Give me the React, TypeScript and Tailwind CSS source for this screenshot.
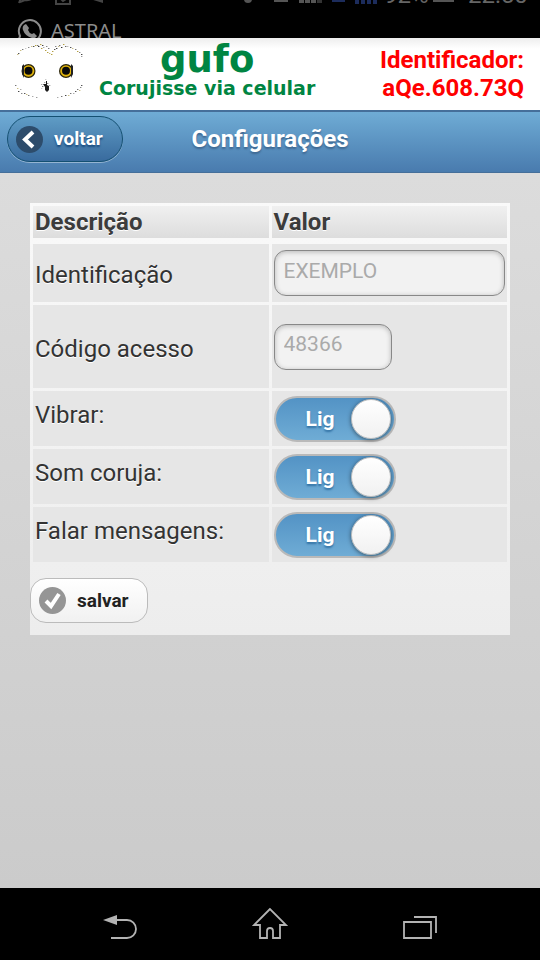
import { useState } from 'react';

const speckles: [number, number, string][] = [
  [18, 15, '#555'], [20, 12, '#c9bd84'], [22, 11, '#777'], [25, 10, '#ccc'], [28, 9, '#888'], [31, 8, '#c9bd84'],
  [33, 8, '#555'], [35, 7, '#b5a040'], [37, 7, '#777'], [38, 8, '#333'], [40, 6, '#b5a040'], [42, 7, '#444'],
  [41, 10, '#b5a040'], [43, 9, '#aaa'], [45, 12, '#b5a040'], [46, 8, '#888'], [47, 14, '#b5a040'], [48, 10, '#777'],
  [49, 15, '#c9bd84'], [51, 16, '#b5a040'], [52, 13, '#b5a040'], [54, 11, '#555'], [55, 8, '#888'], [56, 10, '#444'],
  [58, 8, '#c9bd84'], [59, 7, '#777'], [61, 9, '#333'], [63, 6, '#b5a040'], [65, 8, '#666'], [67, 8, '#bbb'],
  [70, 9, '#555'], [72, 10, '#c9bd84'], [75, 11, '#777'], [77, 13, '#b5a040'], [79, 14, '#888'], [81, 16, '#444'],
  [81, 18, '#999'], [17, 16, '#c9bd84'], [15, 47, '#777'], [17, 50, '#c9bd84'], [18, 53, '#444'], [20, 51, '#aaa'],
  [21, 55, '#888'], [24, 55, '#555'], [26, 56, '#c9bd84'], [28, 57, '#777'], [32, 58, '#aaa'], [36, 59, '#999'],
  [57, 59, '#aaa'], [61, 58, '#777'], [65, 57, '#444'], [68, 57, '#c9bd84'], [70, 55, '#777'], [73, 55, '#aaa'],
  [75, 53, '#555'], [77, 51, '#777'], [79, 52, '#c9bd84'], [80, 49, '#888'], [81, 47, '#555'], [41, 46, '#aaa'],
  [42, 48, '#777'], [44, 44, '#aaa'], [47, 45, '#888'], [49, 47, '#aaa'], [41, 50, '#ccc'], [45, 41, '#ccc'],
];

function Eye({ cx }: { cx: number }) {
  return (
    <g>
      <circle cx={cx} cy="33" r="7" fill="#2a2408" />
      <circle cx={cx} cy="33" r="5.8" fill="#e0b30c" />
      <circle cx={cx} cy="32.800" r="4" fill="#080808" />
    </g>
  );
}

function Owl() {
  return (
    <svg viewBox="0 0 99 72" className="h-[72px] w-[99px] shrink-0" role="img" aria-label="Coruja">
      {speckles.map(([x, y, fill]) => (
        <rect key={`${x}-${y}`} x={x} y={y} width="1.4" height="1" fill={fill} />
      ))}
      <Eye cx={28.5} />
      <Eye cx={66} />
      <path d="M22 28l2-2v14l-2-4zM73 28l-2-2v14l2-4z" fill="#222" />
      <path d="M43 46h3v-3h1v4l2 1v4l-2 2-2-2v-3z" fill="#1c1c1c" />
    </svg>
  );
}

function StatusBar() {
  return (
    <div className="flex h-[38px] flex-col overflow-hidden bg-black text-[#8c8c8c]">
      <div className="flex h-1 w-full shrink-0 items-end px-[17px]">
        <svg viewBox="0 0 506 6" className="h-[6px] w-full overflow-visible" aria-hidden="true">
          <g fill="none" stroke="#444" strokeWidth="2">
            <path d="M2 5l2-5M3 4l5-2q7 1 9-5M39 0v6h14v-6M44 1l2 2 3-2" />
          </g>
          <path d="M73 1h13v4z" fill="#444" />
          <circle cx="231" cy="1" r="4" fill="#555" />
          <path d="M257 1h14v3h-14zM282 0h5v5h-5zM288 0h5v5h-5zM294 0h5v5h-5zM416 0h21v4h-21z" fill="#555" />
          <path d="M300 0h5v5h-5z" fill="#333" />
          <path d="M315 0h13v4h-13zM338 0h4v6h-4zM344 0h4v6h-4zM350 0h4v6h-4zM356 0h4v6h-4z" fill="#1c2c5c" />
          <g fontFamily="Roboto, sans-serif" fontSize="24" fill="#666">
            <text x="367" y="5">92%</text>
            <text x="451" y="5">22:50</text>
          </g>
        </svg>
      </div>
      <div className="flex shrink-0 gap-2 px-[15px] pt-[13px] font-['Noto_Sans',sans-serif] text-[20px] leading-7">
        <svg viewBox="0 0 28 28" className="size-7" fill="none" stroke="currentColor" aria-hidden="true">
          <path d="M3 25l2-6a11 11 0 1 1 5 5z" strokeWidth="2" />
          <path d="M9 8l2-1 3 4-1 2q1 3 4 4l2-1 3 3q-2 3-5 2-7-2-9-8-1-3 1-5z" fill="currentColor" stroke="none" />
        </svg>
        <span>ASTRAL</span>
      </div>
    </div>
  );
}

function Toggle({ id }: { id: string }) {
  const [on, setOn] = useState(true);
  return (
    <label
      htmlFor={id}
      className={`relative flex h-[46px] w-[122px] cursor-pointer items-center rounded-full border-2 border-[#b9b9b9] px-[3px] text-[21px] font-bold ${
        on ? 'justify-end bg-linear-to-b from-[#5393c5] to-[#6facd5] text-white' : 'flex-row-reverse justify-end bg-[#eee] text-[#333]'
      }`}
    >
      <input id={id} type="checkbox" role="switch" checked={on} onChange={() => setOn(!on)} className="sr-only" />
      <span className={on ? 'mr-4 [text-shadow:0_2px_2px_#3373a5]' : 'ml-3'}>{on ? 'Lig' : 'Desl'}</span>
      <span className="size-10 rounded-full border border-[#bbb] bg-linear-to-b from-white to-[#f1f1f1] shadow-[0_1px_4px_rgba(0,0,0,0.5)]" />
    </label>
  );
}

const cell = 'bg-[#e6e6e6] px-[2px] py-0';
const headCell =
  'border-b-3 border-transparent bg-linear-to-b from-[#f0f0f0] to-[#ddd] bg-clip-padding px-[2px] py-0 leading-8 text-[#3c3c3c]';
const field =
  'block h-[46px] rounded-xl border border-[#888] bg-[#f2f2f2] px-[9px] pb-[5px] text-[21px] text-[#aaa] shadow-[inset_0_1px_5px_rgba(0,0,0,0.25)] outline-none';

const switches = [
  { id: 'vibrar', label: 'Vibrar:' },
  { id: 'som', label: 'Som coruja:' },
  { id: 'falar', label: 'Falar mensagens:' },
];

export default function App() {
  return (
    <div className="flex min-h-screen flex-col bg-black font-[Roboto,sans-serif] text-[#333]">
      <StatusBar />
      <header className="flex h-[72px] bg-linear-to-b from-[#eee] to-white to-15%">
        <Owl />
        <div className="flex flex-col items-center pt-[2px] font-['DejaVu_Sans',sans-serif] font-bold text-[#008542]">
          <span className="text-[37px] leading-[40px]">gufo</span>
          <span className="text-[19px] leading-4 whitespace-nowrap">Corujisse via celular</span>
        </div>
        <div className="ml-auto pt-2 pr-4 text-right text-2xl leading-7 font-bold text-[#f00]">
          <div>Identificador:</div>
          <div>aQe.608.73Q</div>
        </div>
      </header>
      <div className="grid h-[63px] grid-cols-[1fr_auto_1fr] items-center border-t-2 border-b border-[#456f9a] bg-linear-to-b from-[#6facd5] to-[#497bae] px-[7px] text-white">
        <button
          type="button"
          className="mb-[6px] flex h-[46px] w-[116px] items-center gap-[11px] rounded-full border border-[#145072] bg-linear-to-b from-[#5f9cc5] to-[#396b9e] pl-2 text-[19px] font-bold shadow-[0_1px_0_rgba(255,255,255,0.4)] [text-shadow:0_2px_2px_#194b7e]"
        >
          <svg viewBox="0 0 27 27" className="size-[27px]" aria-hidden="true">
            <circle cx="13.5" cy="13.5" r="13.5" fill="#2d4c6b" />
            <path d="M17 6l-8 7.500 8 7.500" fill="none" stroke="#fff" strokeWidth="4" />
          </svg>
          voltar
        </button>
        <h1 className="pb-[6px] text-2xl font-bold [text-shadow:0_2px_2px_#3e6790]">Configurações</h1>
      </div>
      <main className="flex-1 bg-linear-to-b from-[#dcdcdc] to-[#cbcbcb] px-[30px] pt-[30px]">
        <form
          onSubmit={(e) => e.preventDefault()}
          className="bg-linear-to-b from-[#f9f9f9] to-[#ededed] pb-3 text-2xl [text-shadow:0_1px_0_#fff]"
        >
          <table className="w-full table-fixed border-separate border-spacing-[3px]">
            <thead>
              <tr className="h-[35px] text-left">
                <th className={headCell}>Descrição</th>
                <th className={headCell}>Valor</th>
              </tr>
            </thead>
            <tbody>
              <tr className="h-[58px]">
                <td className={`${cell} pt-1`}>
                  <label htmlFor="identificacao">Identificação</label>
                </td>
                <td className={cell}>
                  <input id="identificacao" defaultValue="EXEMPLO" className={`${field} w-full`} />
                </td>
              </tr>
              <tr className="h-[83px]">
                <td className={`${cell} pt-1`}>
                  <label htmlFor="codigo">Código acesso</label>
                </td>
                <td className={cell}>
                  <input id="codigo" defaultValue="48366" className={`${field} w-[118px]`} />
                </td>
              </tr>
              {switches.map(({ id, label }) => (
                <tr key={id} className="h-[55px]">
                  <td className={`${cell} pb-2`}>
                    <label htmlFor={id}>{label}</label>
                  </td>
                  <td className={cell}>
                    <Toggle id={id} />
                  </td>
                </tr>
              ))}
            </tbody>
          </table>
          <button
            type="submit"
            className="mt-[13px] flex h-[45px] w-[118px] items-center gap-[11px] rounded-2xl border border-[#bbb] bg-linear-to-b from-white to-[#f1f1f1] pl-2 text-[19px] font-bold text-[#222]"
          >
            <svg viewBox="0 0 27 27" className="size-[27px]" aria-hidden="true">
              <circle cx="13.5" cy="13.5" r="13.5" fill="#959595" />
              <path d="M7 14l5 5 8-12" fill="none" stroke="#fff" strokeWidth="4" />
            </svg>
            salvar
          </button>
        </form>
      </main>
      <nav className="flex h-[72px] items-start justify-center gap-[110px] bg-black pt-[19px] text-[#b3b3b3]">
        <button type="button" aria-label="Voltar">
          <svg viewBox="0 0 40 40" className="size-10" fill="none" stroke="currentColor" strokeWidth="1.8">
            <path d="M14 13h13a9 9 0 0 1 0 18H11" />
            <path d="M3 13l14-5v10z" fill="currentColor" stroke="none" />
          </svg>
        </button>
        <button type="button" aria-label="Início">
          <svg viewBox="0 0 40 40" className="size-10" fill="none" stroke="currentColor" strokeWidth="1.8">
            <path d="M20 2L4 18h6v13h7v-7a3 3 0 0 1 6 0v7h7V18h6z" />
          </svg>
        </button>
        <button type="button" aria-label="Recentes">
          <svg viewBox="0 0 40 40" className="size-10" fill="none" stroke="currentColor" strokeWidth="1.8">
            <path d="M4 15h27v16H4zM14 10h22v16" />
          </svg>
        </button>
      </nav>
    </div>
  );
}
